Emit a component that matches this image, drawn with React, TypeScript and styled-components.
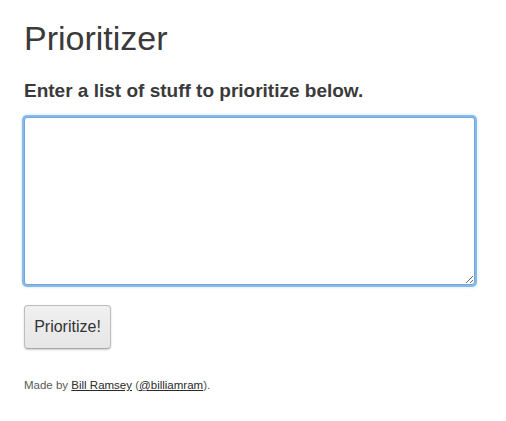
import styled, { createGlobalStyle } from 'styled-components';

const GlobalStyle = createGlobalStyle`
  body {
    margin: 0;
    background: #fff;
    font-family: 'Liberation Sans', Arial, sans-serif;
    color: #333;
  }
`;

const Page = styled.div`
  display: flex;
  flex-direction: column;
  align-items: flex-start;
  padding: 18px 24px 0;
`;

const Title = styled.h1`
  margin: 0;
  font-size: 34px;
  line-height: 40px;
  font-weight: 400;
  color: #3a3a3a;
`;

const Prompt = styled.h4`
  margin: 21px 0 14px;
  font-size: 19px;
  line-height: 24px;
  font-weight: 700;
  color: #3a3a3a;
`;

const ListInput = styled.textarea`
  box-sizing: border-box;
  width: 451px;
  height: 168px;
  margin: 0;
  padding: 6px;
  border: 1px solid #6fa6dc;
  border-radius: 3px;
  outline: none;
  box-shadow: 0 0 0 2px rgba(125, 175, 228, 0.85), 0 0 3px 2px rgba(82, 168, 236, 0.35);
  font-family: 'Liberation Sans', Arial, sans-serif;
  font-size: 14px;
  color: #555;
`;

const Button = styled.button`
  box-sizing: border-box;
  margin-top: 20px;
  width: 87px;
  height: 44px;
  padding: 0;
  border: 1px solid #bdbdbd;
  border-bottom-color: #a8a8a8;
  border-radius: 4px;
  background: linear-gradient(180deg, #f0f0f0 0%, #e6e6e6 100%);
  box-shadow: 0 1px 2px rgba(0, 0, 0, 0.2);
  font-family: 'Liberation Sans', Arial, sans-serif;
  font-size: 16px;
  color: #333;
  cursor: pointer;
`;

const Footer = styled.p`
  margin: 29px 0 0;
  font-size: 11.5px;
  line-height: 14px;
  color: #5a5a5a;
`;

const Link = styled.a`
  color: #2a2a2a;
  text-decoration: underline;
`;

export default function App() {
  return (
    <>
      <GlobalStyle />
      <Page>
        <Title>Prioritizer</Title>
        <Prompt>Enter a list of stuff to prioritize below.</Prompt>
        <ListInput />
        <Button>Prioritize!</Button>
        <Footer>
          Made by <Link href="#">Bill Ramsey</Link> (<Link href="#">@billiamram</Link>).
        </Footer>
      </Page>
    </>
  );
}
